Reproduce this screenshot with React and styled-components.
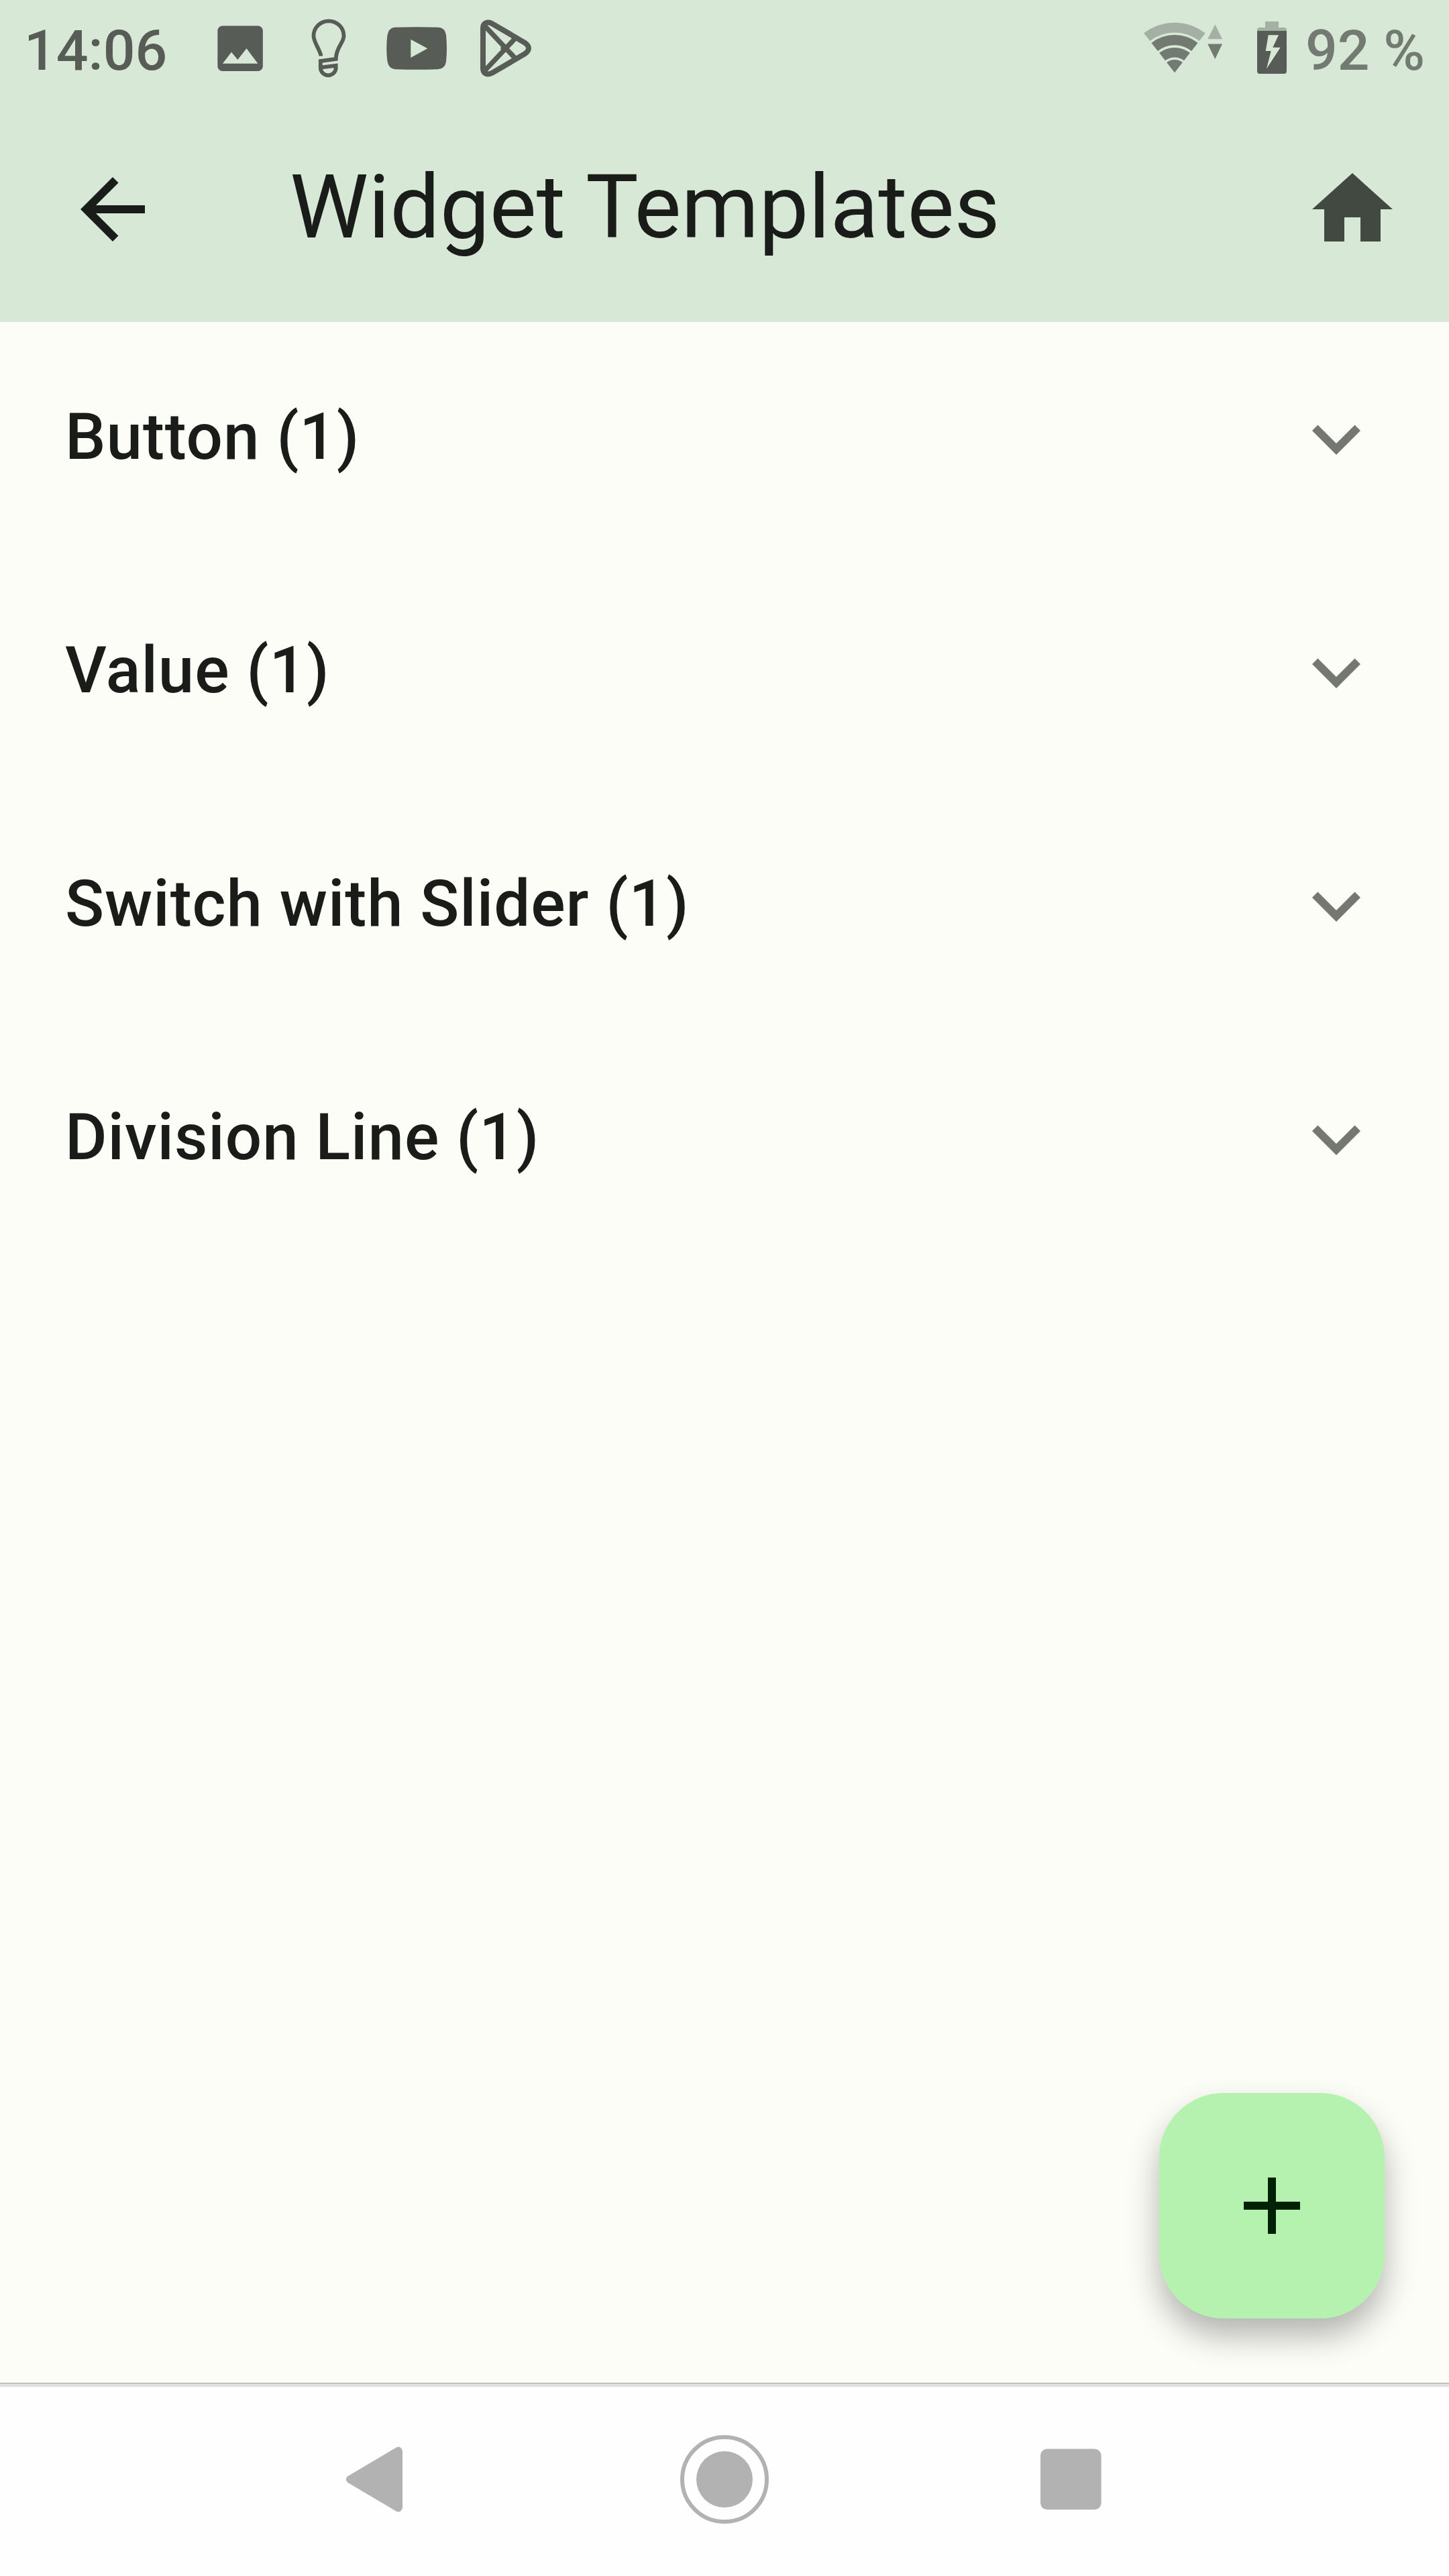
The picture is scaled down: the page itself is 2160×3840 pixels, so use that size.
import React from "react";
import styled, { createGlobalStyle } from "styled-components";

const GlobalStyle = createGlobalStyle`
  html, body { margin: 0; padding: 0; background: #fcfdf7; }
  * { box-sizing: border-box; }
`;

const Screen = styled.div`
  width: 2160px;
  height: 3840px;
  display: flex;
  flex-direction: column;
  background: #fcfdf7;
  font-family: Roboto, "Liberation Sans", sans-serif;
  color: #1a1c19;
  overflow: hidden;
`;

const Icon = styled.svg`
  display: block;
  flex: none;
  width: ${(p) => p.$w || 144}px;
  height: 144px;
  color: ${(p) => p.$color || "inherit"};
  fill: currentColor;
`;

const StatusBar = styled.div`
  height: 144px;
  flex: none;
  display: flex;
  justify-content: space-between;
  padding: 0 36px;
  background: #d7e8d6;
  color: #575d56;
`;

const StatusGroup = styled.div`
  display: flex;
  align-items: center;
`;

const StatusText = styled.span`
  width: ${(p) => p.$w}px;
  padding-top: 7px;
  font-size: 84px;
  font-weight: 500;
  line-height: 137px;
  white-space: nowrap;
  color: ${(p) => p.$color};
`;

const SignalIcon = styled(Icon)`
  margin-right: 48px;
`;

const BatteryIcon = styled(Icon)`
  margin-right: 26px;
`;

const AppBar = styled.header`
  height: 336px;
  flex: none;
  display: flex;
  align-items: center;
  padding: 0 72px 0 96px;
  background: #d7e8d6;
`;

const IconButton = styled.button`
  display: flex;
  padding: 0;
  border: 0;
  background: none;
  color: ${(p) => p.$color};
`;

const Title = styled.h1`
  flex: 1;
  margin: 0;
  padding: 0 0 6px 192px;
  font-size: 132px;
  font-weight: 400;
  line-height: 168px;
  white-space: nowrap;
`;

const Body = styled.main`
  position: relative;
  flex: 1;
`;

const Tile = styled.div`
  height: 348px;
  display: flex;
  align-items: center;
  justify-content: space-between;
  padding: 0 96px 0 97px;
`;

const TileLabel = styled.span`
  padding-bottom: 6px;
  font-size: 96px;
  font-weight: 500;
  line-height: 144px;
  letter-spacing: 0.94px;
  white-space: nowrap;
`;

const Fab = styled.button`
  position: absolute;
  right: 96px;
  bottom: 96px;
  width: 336px;
  height: 336px;
  display: flex;
  align-items: center;
  justify-content: center;
  padding: 0;
  border: 0;
  border-radius: 96px;
  background: #b6f2af;
  color: #002204;
  box-shadow: 0 26px 48px rgba(0, 0, 0, 0.29);
`;

const NavBar = styled.nav`
  height: 288px;
  flex: none;
  display: flex;
  align-items: center;
  justify-content: center;
  gap: 378px;
  box-shadow: inset 0 1px 0 #a2a2a2, inset 0 6px 0 #e0e0e0;
  background: #fefefe;
`;

const tiles = ["Button (1)", "Value (1)", "Switch with Slider (1)", "Division Line (1)"];

// Wi-Fi band between two radii, fanned around the apex at (71, 108.3)
const band = (outer, inner) => {
  const x = (r, s) => 71 + s * 0.614 * r;
  const y = (r) => 108.3 - 0.789 * r;
  return `M${x(outer, -1)} ${y(outer)}A${outer} ${outer} 0 0 1 ${x(outer, 1)} ${y(outer)}L${x(inner, 1)} ${y(inner)}A${inner} ${inner} 0 0 0 ${x(inner, -1)} ${y(inner)}Z`;
};

const faint = "#a4b0a4";
const strong = "#727a71";

export default function App() {
  return (
    <Screen>
      <GlobalStyle />
      <StatusBar>
        <StatusGroup>
          <StatusText $w={256} $color="#575d56">14:06</StatusText>
          <Icon $w={132} viewBox="0 0 132 144">
            <path transform="translate(21.1 27.2) scale(3.75)" d="M21 19V5c0-1.1-.9-2-2-2H5c-1.1 0-2 .9-2 2v14c0 1.1.9 2 2 2h14c1.1 0 2-.9 2-2zM8.5 13.5l2.5 3.01L14.5 12l4.5 6H5l3.5-4.5z" />
          </Icon>
          <Icon $w={132} viewBox="0 0 132 144">
            <g fill="none" stroke="currentColor" strokeWidth="5.8">
              <path d="M54.5 83.5C53.5 75 43.5 63 43.5 53.5A22.5 22.2 0 0 1 88.5 53.5C88.5 64 77 70 76.7 88L53.8 91V101A11.45 11.3 0 0 0 76.7 101V97.8L53.8 100.6" />
            </g>
          </Icon>
          <Icon $w={132} viewBox="0 0 132 144">
            <path fillRule="evenodd" d="M33 40.8Q65 39.8 97 40.8Q107 41 109 52Q111 72 109 92Q107 103 97 103.2Q65 104.2 33 103.2Q24 103 21.5 92Q19 72 21.5 52Q24 41 33 40.8ZM56.3 58.7V86L81.3 72.3Z" />
          </Icon>
          <Icon $w={132} viewBox="0 0 132 144">
            <g fill="none" stroke="currentColor" strokeWidth="8">
              <path d="M32 42C32 34 39 31.5 46 35.5L94 63.5Q106 72 94 80.5L46 108.5C39 112.5 32 110 32 102Z" />
              <path d="M34 38L82 89M34 106L82 55" strokeWidth="7.4" />
            </g>
            <circle cx="64.3" cy="72" r="6" />
          </Icon>
        </StatusGroup>
        <StatusGroup>
          <SignalIcon $w={120} viewBox="24 0 120 144">
            <path fill={faint} d={band(74.6, 59.8)} />
            <path fill={strong} d={band(56.3, 41)} />
            <path fill={strong} d={band(37.3, 22.8)} />
            <path fill={strong} d={band(19.3, 0.1)} />
            <path fill={faint} d="M131.3 36.5L142 58.3H120.3Z" />
            <path fill={strong} d="M131.3 88L142 65.5H120.3Z" />
          </SignalIcon>
          <BatteryIcon $w={48} viewBox="192 0 48 144">
            <path fill={faint} d="M206 32h20v9h8q4 0 4 4v1.5h-44v-1.5q0-4 4-4h8z" />
            <path fillRule="evenodd" d="M194 46h44v60q0 4-4 4h-36q-4 0-4-4zM210.7 52.3L206.7 76H214.7L208 102.5L228.7 70.7H217.3L226 52.3Z" />
          </BatteryIcon>
          <StatusText $w={178} $color={strong}>92 %</StatusText>
        </StatusGroup>
      </StatusBar>
      <AppBar>
        <IconButton $color="#1a1c19" aria-label="Back">
          <Icon viewBox="0 0 24 24">
            <path d="M20 11H7.83l5.59-5.59L12 4l-8 8 8 8 1.41-1.41L7.83 13H20v-2z" />
          </Icon>
        </IconButton>
        <Title>Widget Templates</Title>
        <IconButton $color="#424940" aria-label="Home">
          <Icon viewBox="0 0 24 24">
            <path d="M10 20v-6h4v6h5v-8h3L12 3 2 12h3v8z" />
          </Icon>
        </IconButton>
      </AppBar>
      <Body>
        {tiles.map((label) => (
          <Tile key={label}>
            <TileLabel>{label}</TileLabel>
            <Icon viewBox="0 0 24 24" $color="#757773">
              <path d="M16.59 8.59L12 13.17 7.41 8.59 6 10l6 6 6-6z" />
            </Icon>
          </Tile>
        ))}
        <Fab aria-label="Add">
          <Icon viewBox="0 0 24 24">
            <path d="M19 13h-6v6h-2v-6H5v-2h6V5h2v6h6v2z" />
          </Icon>
        </Fab>
      </Body>
      <NavBar>
        <Icon $w={138} viewBox="0 0 138 144" $color="#b2b2b2">
          <path d="M23 67.5L96.5 24Q102.5 22 105 29.5V114.5Q102.5 122 96.5 120L23 76.5Q18.8 72 23 67.5Z" />
        </Icon>
        <Icon $w={138} viewBox="0 0 138 144" $color="#b2b2b2">
          <circle cx="69" cy="72" r="42" />
          <circle cx="69" cy="72" r="63" fill="none" stroke="currentColor" strokeWidth="6" />
        </Icon>
        <Icon $w={138} viewBox="0 0 138 144" $color="#b2b2b2">
          <rect x="24" y="26.5" width="90.6" height="90.6" rx="10" />
        </Icon>
      </NavBar>
    </Screen>
  );
}
